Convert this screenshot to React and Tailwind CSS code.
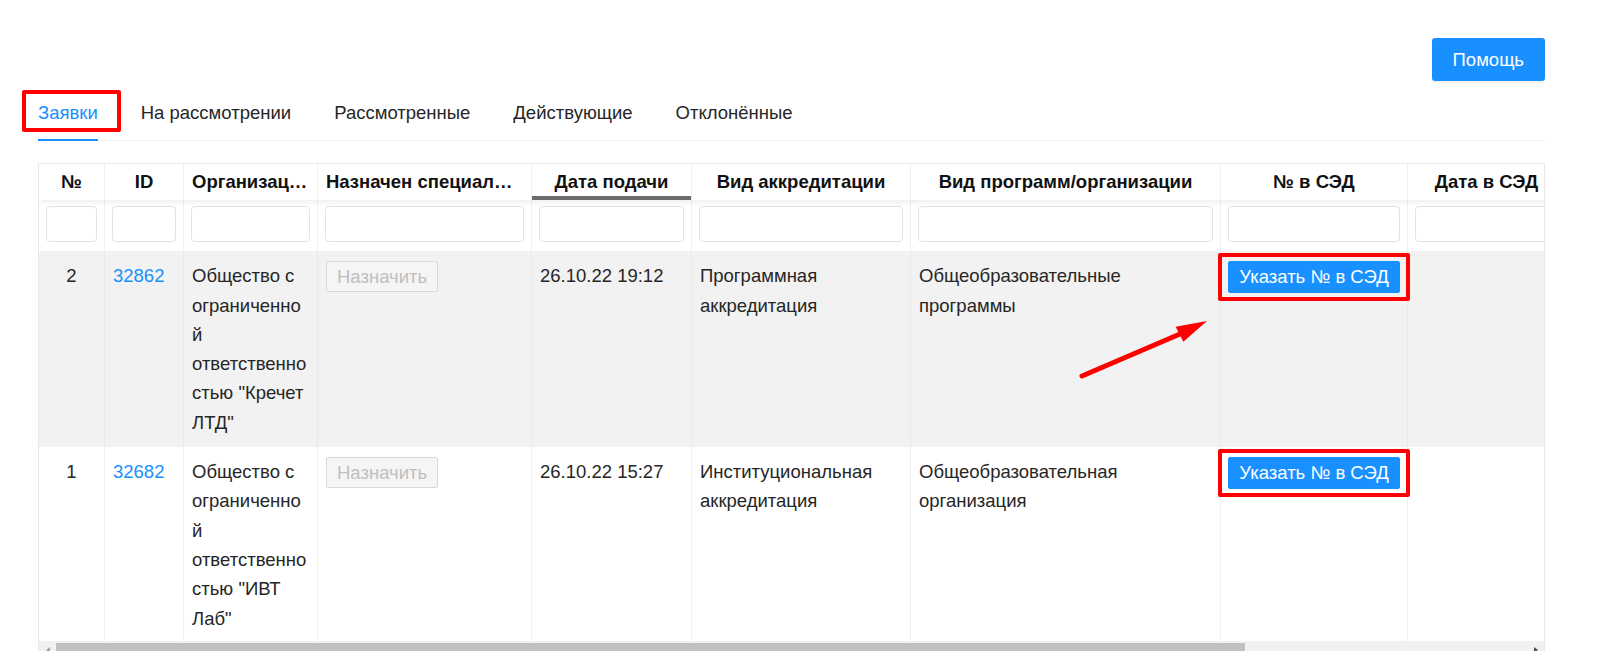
import React from 'react';

const tabs = ['Заявки', 'На рассмотрении', 'Рассмотренные', 'Действующие', 'Отклонённые'];

const cols = 'grid grid-cols-[66px_79px_134px_214px_160px_219px_310px_187px_158px]';

const headers = [
  { title: '№' },
  { title: 'ID' },
  { title: 'Организация' },
  { title: 'Назначен специалист' },
  { title: 'Дата подачи', sorted: true },
  { title: 'Вид аккредитации' },
  { title: 'Вид программ/организации' },
  { title: '№ в СЭД' },
  { title: 'Дата в СЭД' },
];

const rows = [
  {
    n: '2',
    id: '32862',
    org: ['Общество с', 'ограниченно', 'й', 'ответственно', 'стью "Кречет', 'ЛТД"'],
    date: '26.10.22 19:12',
    acc: 'Программная аккредитация',
    prog: 'Общеобразовательные программы',
    bg: 'bg-[#f2f2f2]',
    line: 'border-[#e9e9e9]',
  },
  {
    n: '1',
    id: '32682',
    org: ['Общество с', 'ограниченно', 'й', 'ответственно', 'стью "ИВТ', 'Лаб"'],
    date: '26.10.22 15:27',
    acc: 'Институциональная аккредитация',
    prog: 'Общеобразовательная организация',
    bg: 'bg-white',
    line: 'border-[#f0f0f0]',
  },
];

function Cell({ className = '', line, children }) {
  return <div className={`border-r px-2 py-[10px] ${line} ${className}`}>{children}</div>;
}

function DataRow({ row }) {
  return (
    <div className={`${cols} ${row.bg}`}>
      <Cell line={row.line} className="text-center">{row.n}</Cell>
      <Cell line={row.line}>
        <a href="#" className="text-[#1890ff]">{row.id}</a>
      </Cell>
      <Cell line={row.line}>
        {row.org.map((l, i) => (
          <div key={i}>{l}</div>
        ))}
      </Cell>
      <Cell line={row.line}>
        <button
          disabled
          className="h-[31px] whitespace-nowrap rounded-[2px] border border-[#d9d9d9] bg-[#f5f5f5] px-[10px] leading-[29px] text-[#bfbfbf]"
        >
          Назначить
        </button>
      </Cell>
      <Cell line={row.line}>{row.date}</Cell>
      <Cell line={row.line}>{row.acc}</Cell>
      <Cell line={row.line}>{row.prog}</Cell>
      <Cell line={row.line} className="pl-[7px]">
        <div className="relative inline-block">
          <button className="h-[32px] w-[172px] whitespace-nowrap rounded-[2px] border border-[#1890ff] bg-[#1890ff] leading-[30px] text-white">
            Указать № в СЭД
          </button>
          <span className="pointer-events-none absolute -inset-x-[10px] -inset-y-[8px] rounded-[2px] border-4 border-[#ff0000]" />
        </div>
      </Cell>
      <Cell line={row.line} />
    </div>
  );
}

export default function App() {
  return (
    <div className="relative h-[651px] overflow-hidden bg-white font-['Liberation_Sans',Arial,sans-serif] text-[18.5px] leading-[29.3px] text-[#262626]">
      <div className="pl-[38px] pr-[55px] pt-[38px]">
        {/* Top actions */}
        <div className="flex justify-end">
          <button className="h-[43px] rounded-[3px] bg-[#1890ff] px-[21px] text-white shadow-[0_2px_0_rgba(0,0,0,0.045)]">
            Помощь
          </button>
        </div>

        {/* Tabs */}
        <div className="mt-[4px] flex border-b border-[#f0f0f0]">
          {tabs.map((t, i) => (
            <div
              key={t}
              className={`relative py-[13px] ${i ? 'ml-[43px] text-[#262626]' : 'text-[#1890ff]'}`}
            >
              {t}
              {i === 0 && (
                <>
                  <span className="absolute -bottom-px left-0 right-0 h-[2px] bg-[#1890ff]" />
                  <span className="absolute left-[-16px] top-[5px] h-[42px] w-[99px] rounded-[2px] border-4 border-[#ff0000]" />
                </>
              )}
            </div>
          ))}
        </div>

        {/* Table */}
        <div className="mt-[22px] border-x border-[#e8e8e8]">
          <div className="h-[478px] overflow-hidden border-t border-[#ececec]">
            <div className="w-[1527px]">
              <div className={`${cols} relative z-10 bg-white shadow-[0_3px_6px_-1px_rgba(0,0,0,0.08)]`}>
                {headers.map((h) => (
                  <div
                    key={h.title}
                    className={`h-[36px] truncate border-r border-[#f0f0f0] px-2 text-center font-bold leading-[36px] text-[#111] ${
                      h.sorted ? 'shadow-[inset_0_-4px_0_#6b6b6b]' : ''
                    }`}
                  >
                    {h.title}
                  </div>
                ))}
              </div>
              <div className={`${cols} bg-white`}>
                {headers.map((h) => (
                  <div key={h.title} className="h-[51px] border-r border-[#f0f0f0] px-[7px] pt-[6px]">
                    <input className="block h-[36px] w-full rounded-[4px] border border-[#e3e3e3] bg-white outline-none" />
                  </div>
                ))}
              </div>
              {rows.map((r) => (
                <DataRow key={r.id} row={r} />
              ))}
            </div>
          </div>

          {/* Horizontal scrollbar */}
          <div className="flex h-[17px] bg-[#f1f1f1]">
            <div className="flex w-[17px] items-center justify-center">
              <svg width="8" height="8" viewBox="0 0 8 8">
                <polygon points="6,1 6,7 2,4" fill="#a3a3a3" />
              </svg>
            </div>
            <div className="flex-1 py-[2px]">
              <div className="h-full w-[1189px] bg-[#c1c1c1]" />
            </div>
            <div className="flex w-[17px] items-center justify-center">
              <svg width="8" height="8" viewBox="0 0 8 8">
                <polygon points="2,1 2,7 6,4" fill="#505050" />
              </svg>
            </div>
          </div>
        </div>
      </div>

      {/* Annotation arrow */}
      <svg className="pointer-events-none absolute left-[1070px] top-[310px]" width="150" height="80" viewBox="0 0 150 80">
        <line x1="12" y1="66" x2="110" y2="24" stroke="#ff0000" strokeWidth="5" strokeLinecap="round" />
        <polygon points="137,11 105.6,16.7 113.3,31.7" fill="#ff0000" />
      </svg>
    </div>
  );
}
